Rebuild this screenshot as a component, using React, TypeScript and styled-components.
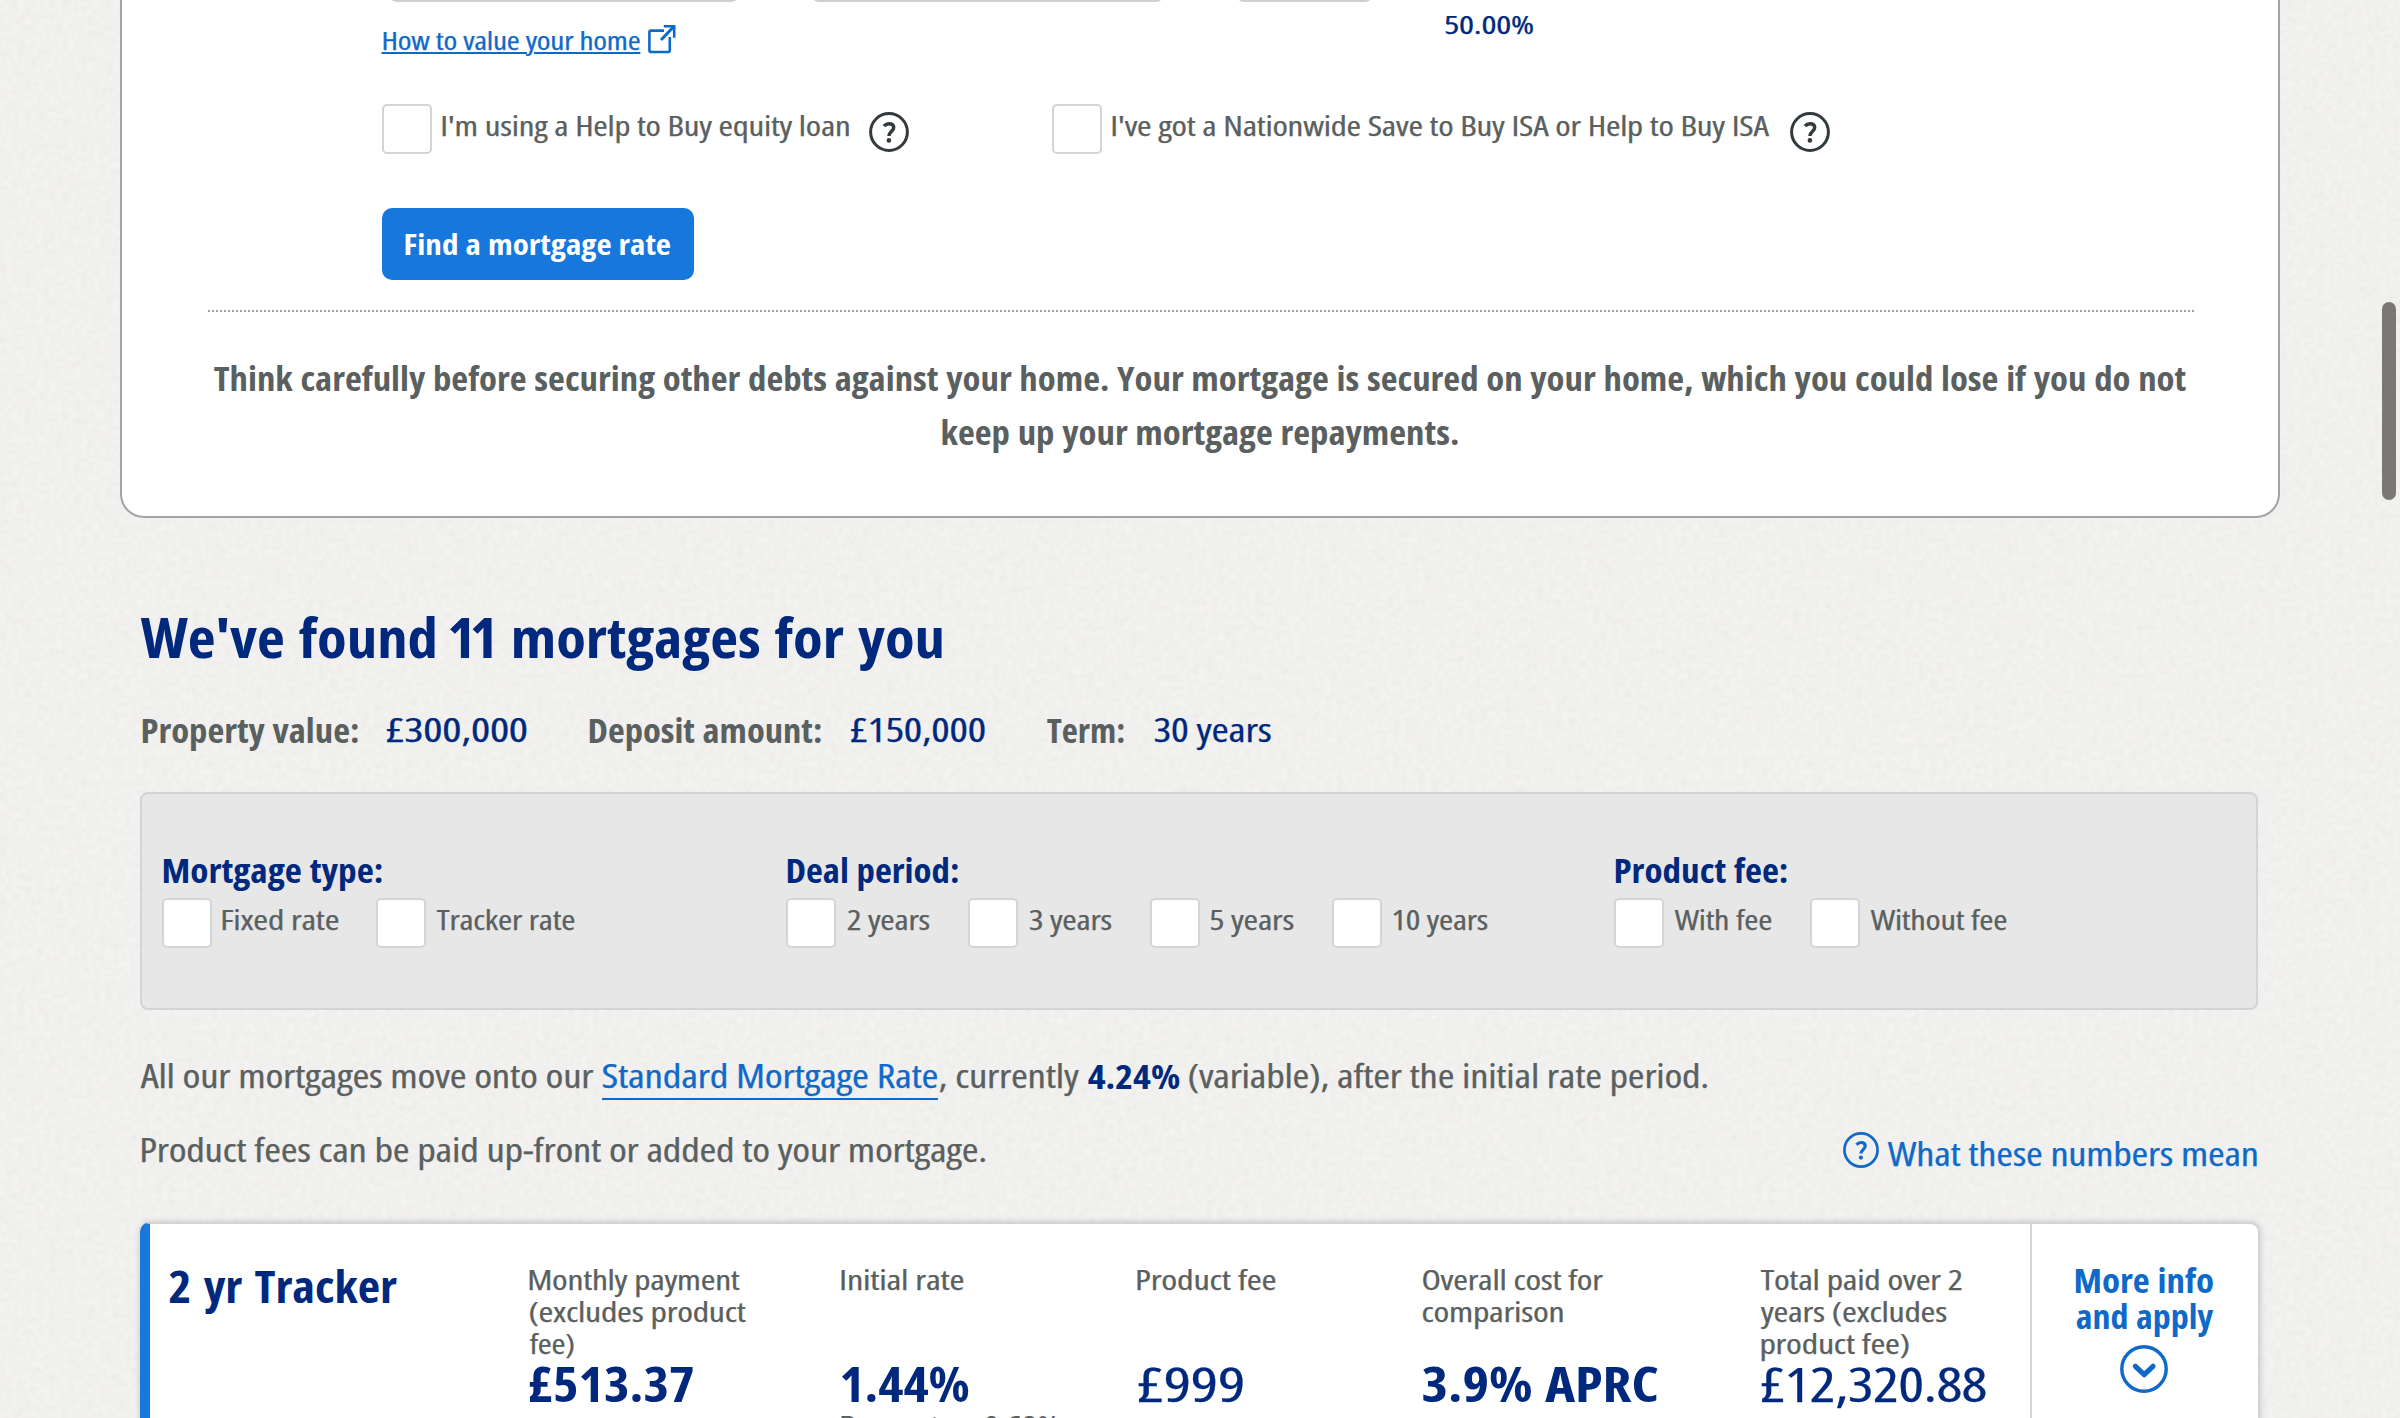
import React, { useLayoutEffect, useState } from 'react';
import styled, { createGlobalStyle } from 'styled-components';

const FONT = '"Open Sans", "Noto Sans", sans-serif';
const c = {
  navy: '#00287d',
  grey: '#5a6060',
  link: '#0f69c9',
  button: '#1777dd',
  line: '#d3d4d5',
  dark: '#333a3e',
};

const GlobalStyle = createGlobalStyle`
  html, body { margin: 0; padding: 0; background: #f1f0ee; overflow: hidden; }
  * { box-sizing: border-box; }
`;

/* ---------- type ---------- */

type Kind = 'small' | 'body' | 'lead' | 'leadBold' | 'button' | 'title' | 'deal' | 'figure' | 'figureBold';
const kinds: Record<Kind, { size: number; line: number; weight: number; track: number; word: number; drop: number }> = {
  small: { size: 26, line: 30, weight: 400, track: -0.2, word: 0.5, drop: 0 },
  body: { size: 28, line: 32, weight: 400, track: -0.2, word: 0.5, drop: 0 },
  lead: { size: 33, line: 36, weight: 400, track: -0.2, word: 0.5, drop: 1.2 },
  leadBold: { size: 33, line: 36, weight: 700, track: 0, word: 1, drop: 1.5 },
  button: { size: 29, line: 36, weight: 700, track: 0, word: 1, drop: 0 },
  title: { size: 56, line: 64, weight: 700, track: 0, word: 3, drop: 0 },
  deal: { size: 44, line: 50, weight: 700, track: 0, word: 3, drop: 0.5 },
  figure: { size: 48, line: 56, weight: 400, track: -0.5, word: 0, drop: 0 },
  figureBold: { size: 48, line: 56, weight: 700, track: 0, word: 2, drop: 0 },
};

const Line = styled.span<{ $w: number; $kind: Kind; $color: string }>`
  display: block;
  flex: none;
  width: ${p => p.$w}px;
  height: ${p => kinds[p.$kind].line}px;
  font-family: ${FONT};
  font-size: ${p => kinds[p.$kind].size}px;
  font-weight: ${p => kinds[p.$kind].weight};
  font-stretch: condensed;
  line-height: ${p => kinds[p.$kind].line}px;
  letter-spacing: ${p => kinds[p.$kind].track}px;
  word-spacing: ${p => kinds[p.$kind].word}px;
  white-space: pre;
  color: ${p => p.$color};
  -webkit-text-stroke: ${p => (kinds[p.$kind].weight === 400 ? 0.25 : 0)}px ${p => p.$color};
`;

const Glyphs = styled.span<{ $underline?: boolean }>`
  display: inline-block;
  transform-origin: 0 50%;
  text-decoration: ${p => (p.$underline ? 'underline' : 'none')};
  text-decoration-thickness: 2px;
  text-underline-offset: 2px;
`;

const Kern = styled.span<{ $em: number }>`
  letter-spacing: -${p => p.$em}em;
`;

/* Sets a line of text to an exact measure, widening the condensed face. */
function Text({ w, kind = 'body', color = c.grey, underline, children }: {
  w: number; kind?: Kind; color?: string; underline?: boolean; children: string;
}) {
  const k = kinds[kind];
  const pair = children.indexOf(' 11 ');
  const [fit, setFit] = useState({ scale: 1, shift: 0 });
  useLayoutEffect(() => {
    const ctx = document.createElement('canvas').getContext('2d') as any;
    ctx.font = `${k.weight} condensed ${k.size}px ${FONT}`;
    ctx.letterSpacing = `${k.track}px`;
    ctx.wordSpacing = `${k.word}px`;
    const m = ctx.measureText(children);
    const kern = pair >= 0 ? k.size * 0.21 : 0;
    const scale = (w - 1) / (m.actualBoundingBoxRight + m.actualBoundingBoxLeft - kern);
    setFit({ scale, shift: m.actualBoundingBoxLeft * scale + 0.7 });
  }, [w, k, children, pair]);
  return (
    <Line $w={w} $kind={kind} $color={color}>
      <Glyphs $underline={underline} style={{ transform: `translate(${fit.shift}px, ${k.drop}px) scaleX(${fit.scale})` }}>
        {pair >= 0
          ? <>{children.slice(0, pair)}<Kern $em={0.08}> </Kern><Kern $em={0.1}>1</Kern><Kern $em={0.03}>1</Kern>{children.slice(pair + 3)}</>
          : children}
      </Glyphs>
    </Line>
  );
}

/* ---------- page ---------- */

const Page = styled.main`
  position: relative;
  width: 2400px;
  height: 1418px;
  overflow: hidden;
  background: #f1f0ee;
`;

const Paper = styled.svg`
  position: absolute;
  inset: 0;
  width: 2400px;
  height: 1418px;
`;

const Content = styled.div`
  position: relative;
  display: flex;
  flex-direction: column;
`;

const Scrollbar = styled.div`
  position: absolute;
  top: 302px;
  right: 4px;
  width: 14px;
  height: 198px;
  border-radius: 7px;
  background: #797876;
`;

/* ---------- finder form ---------- */

const FormCard = styled.section`
  width: 2160px;
  height: 518px;
  margin: 0 120px;
  background: #fff;
  border: 2px solid #a2a5a7;
  border-top: 0;
  border-radius: 0 0 24px 24px;
`;

const InputRow = styled.div`
  display: flex;
  gap: 72px;
  height: 2px;
  padding-left: 267px;
`;

const InputEdge = styled.div<{ $w: number }>`
  width: ${p => p.$w}px;
  height: 24px;
  margin-top: -22px;
  border: 2px solid #cfcfcf;
  border-radius: 8px;
`;

const ValueRow = styled.div`
  display: grid;
  grid-template-columns: 1063px auto;
  height: 102px;
  padding: 7px 0 0 260px;
`;

const ValueLink = styled.div`
  display: flex;
  gap: 8px;
  padding-top: 16px;
`;

const CheckRow = styled.div`
  display: flex;
  height: 104px;
  padding-left: 260px;
`;

const CheckOption = styled.div<{ $w: number }>`
  display: flex;
  width: ${p => p.$w}px;
`;

const Checkbox = styled.span`
  flex: none;
  width: 50px;
  height: 50px;
  margin-right: 10px;
  background: #fff;
  border: 2px solid ${c.line};
  border-radius: 5px;
`;

const CheckLabel = styled.div`
  padding-top: 5px;
`;

const HelpSlot = styled.div`
  padding: 8px 0 0 20px;
`;

const FindButton = styled.button`
  display: block;
  width: 312px;
  height: 72px;
  margin: 0 0 0 260px;
  padding: 0 22px;
  border: 0;
  border-radius: 10px;
  background: ${c.button};
  text-align: left;
`;

const DottedRule = styled.div`
  height: 2px;
  margin: 30px 84px 0;
  background: repeating-linear-gradient(90deg, #fff 0 2px, #a0a0a0 2px 4px);
`;

const Warning = styled.div`
  display: flex;
  flex-direction: column;
  align-items: center;
  gap: 18px;
  padding: 47px 1px 0 0;
`;

/* ---------- results ---------- */

const Results = styled.section`
  display: flex;
  flex-direction: column;
  width: 2120px;
  margin-left: 140px;
`;

const TitleRow = styled.div`
  height: 193px;
  padding-top: 86px;
`;

const Summary = styled.div`
  display: flex;
  height: 81px;
  padding-left: 2px;
`;

const SummaryItem = styled.div<{ $w: number; $gap: number }>`
  display: flex;
  gap: ${p => p.$gap}px;
  width: ${p => p.$w}px;
`;

const Filters = styled.div`
  display: grid;
  grid-template-columns: 624px 828px auto;
  width: 2118px;
  height: 218px;
  padding: 57px 0 0 20px;
  background: #e7e7e7;
  border: 2px solid ${c.line};
  border-radius: 8px;
`;

const FilterTitle = styled.div`
  padding-left: 1px;
  height: 47px;
`;

const FilterOptions = styled.div`
  display: flex;
`;

const Note = styled.p`
  display: flex;
  margin: 0;
  height: 74px;
`;

const Notes = styled.div`
  padding-top: 47px;
  height: 212px;
`;

const InlineGap = styled.span<{ $w: number }>`
  width: ${p => p.$w}px;
  flex: none;
`;

const RateLink = styled.span`
  height: 43px;
  border-bottom: 2px solid ${c.link};
`;

const FeeRow = styled.div`
  display: flex;
  justify-content: space-between;
  width: 2117px;
  padding-left: 1px;
`;

const NumbersLink = styled.div`
  display: flex;
  gap: 8px;
`;

const NumbersLabel = styled.div`
  padding-top: 4px;
`;

const IconBox = styled.span`
  display: block;
  height: 36px;
  margin-top: 1px;
`;

const Deal = styled.article`
  display: flex;
  width: 2120px;
  height: 240px;
  background: #fff;
  border: 2px solid ${c.line};
  border-left: 10px solid ${c.button};
  border-radius: 10px 10px 0 0;
  box-shadow: 0 0 6px rgba(0, 0, 0, 0.18);
`;

const DealName = styled.div`
  width: 379px;
  padding: 36px 0 0 19px;
`;

const DealColumn = styled.div<{ $w: number }>`
  display: flex;
  flex-direction: column;
  width: ${p => p.$w}px;
  flex: none;
`;

const ColumnLabel = styled.div`
  height: 132px;
  padding-top: 39px;
`;

const Reversion = styled.div`
  margin-top: -3px;
`;

const Apply = styled.div`
  display: flex;
  flex: 1;
  flex-direction: column;
  align-items: center;
  border-left: 2px solid ${c.line};
  padding: 37px 2px 0 0;
`;

const ApplyIcon = styled.div`
  margin-top: 12px;
  height: 48px;
`;

/* ---------- icons ---------- */

const HelpIcon = ({ size, color }: { size: number; color: string }) => (
  <svg width={size} height={size} viewBox="0 0 40 40" fill="none" stroke={color} strokeWidth="3">
    <circle cx="20" cy="20" r="18.4" />
    <path d="M15 14.2c1.4-1.7 3-2.5 5-2.5 2.9 0 4.7 1.5 4.7 3.9 0 3.7-4.8 4.2-4.8 8.4" strokeWidth="3.5" />
    <circle cx="19.9" cy="28.4" r="2.3" fill={color} stroke="none" />
  </svg>
);

const ExternalIcon = () => (
  <svg width="28" height="29" viewBox="0 0 28 29" fill="none" stroke={c.link} strokeWidth="2.6">
    <path d="M16 5.6H3.2Q1.4 5.6 1.4 7.4V25.2Q1.4 27 3.2 27H20Q21.8 27 21.8 25.2V12" />
    <path d="M13 15L25.6 1.8" strokeWidth="3" />
    <path d="M15.8 1.3h10.4v11.4" />
  </svg>
);

const ChevronCircle = () => (
  <svg width="48" height="48" viewBox="0 0 48 48" fill="none" stroke={c.link}>
    <circle cx="24" cy="24" r="22.2" strokeWidth="3.4" />
    <path d="M15.4 21.3l8.8 8.4 8.8-8.4" strokeWidth="5.2" strokeLinecap="round" strokeLinejoin="round" />
  </svg>
);

/* ---------- data ---------- */

const filters = [
  { title: 'Mortgage type:', w: 219, options: [['Fixed rate', 117, 214], ['Tracker rate', 139, 260]] },
  { title: 'Deal period:', w: 171, options: [['2 years', 84, 182], ['3 years', 84, 182], ['5 years', 84, 182], ['10 years', 96, 200]] },
  { title: 'Product fee:', w: 172, options: [['With fee', 98, 196], ['Without fee', 137, 220]] },
] as { title: string; w: number; options: [string, number, number][] }[];

const columns: { w: number; label: [string, number][]; value: [string, number]; bold?: boolean; extra?: [string, number] }[] = [
  { w: 312, label: [['Monthly payment', 211], ['(excludes product', 217], ['fee)', 45]], value: ['£513.37', 164], bold: true },
  { w: 296, label: [['Initial rate', 123]], value: ['1.44%', 128], bold: true, extra: ['Base rate + 0.69%', 220] },
  { w: 285, label: [['Product fee', 139]], value: ['£999', 107] },
  { w: 338, label: [['Overall cost for', 182], ['comparison', 141]], value: ['3.9% APRC', 237], bold: true },
  { w: 270, label: [['Total paid over 2', 202], ['years (excludes', 187], ['product fee)', 149]], value: ['£12,320.88', 226] },
];

export default function App() {
  return (
    <Page>
      <GlobalStyle />
      <Paper>
        <filter id="grain" x="0" y="0" width="100%" height="100%" colorInterpolationFilters="sRGB">
          <feTurbulence type="fractalNoise" baseFrequency="0.16" numOctaves="3" seed="4" stitchTiles="stitch" />
          <feColorMatrix values="0.04 0 0 0 0.924  0.04 0 0 0 0.921  0.04 0 0 0 0.914  0 0 0 0 1" />
        </filter>
        <rect width="2400" height="1418" filter="url(#grain)" />
      </Paper>
      <Content>
        <FormCard>
          <InputRow>
            <InputEdge $w={350} />
            <InputEdge $w={353} />
            <InputEdge $w={137} />
          </InputRow>
          <ValueRow>
            <ValueLink>
              <Text w={258} kind="small" color={c.link} underline>How to value your home</Text>
              <ExternalIcon />
            </ValueLink>
            <Text w={88} kind="small" color={c.navy}>50.00%</Text>
          </ValueRow>
          <CheckRow>
            <CheckOption $w={670}>
              <Checkbox />
              <CheckLabel><Text w={407}>I'm using a Help to Buy equity loan</Text></CheckLabel>
              <HelpSlot><HelpIcon size={40} color={c.dark} /></HelpSlot>
            </CheckOption>
            <CheckOption $w={800}>
              <Checkbox />
              <CheckLabel><Text w={658}>I've got a Nationwide Save to Buy ISA or Help to Buy ISA</Text></CheckLabel>
              <HelpSlot><HelpIcon size={40} color={c.dark} /></HelpSlot>
            </CheckOption>
          </CheckRow>
          <FindButton><Text w={267} kind="button" color="#fff">Find a mortgage rate</Text></FindButton>
          <DottedRule />
          <Warning>
            <Text w={1973} kind="leadBold">Think carefully before securing other debts against your home. Your mortgage is secured on your home, which you could lose if you do not</Text>
            <Text w={517} kind="leadBold">keep up your mortgage repayments.</Text>
          </Warning>
        </FormCard>

        <Results>
          <TitleRow><Text w={802} kind="title" color={c.navy}>We've found 11 mortgages for you</Text></TitleRow>
          <Summary>
            <SummaryItem $w={447} $gap={28}>
              <Text w={216} kind="leadBold">Property value:</Text>
              <Text w={141} kind="lead" color={c.navy}>£300,000</Text>
            </SummaryItem>
            <SummaryItem $w={457} $gap={29}>
              <Text w={232} kind="leadBold">Deposit amount:</Text>
              <Text w={135} kind="lead" color={c.navy}>£150,000</Text>
            </SummaryItem>
            <SummaryItem $w={240} $gap={30}>
              <Text w={78} kind="leadBold">Term:</Text>
              <Text w={118} kind="lead" color={c.navy}>30 years</Text>
            </SummaryItem>
          </Summary>

          <Filters>
            {filters.map(f => (
              <div key={f.title}>
                <FilterTitle><Text w={f.w} kind="leadBold" color={c.navy}>{f.title}</Text></FilterTitle>
                <FilterOptions>
                  {f.options.map(([name, w, slot]) => (
                    <CheckOption key={name} $w={slot}>
                      <Checkbox />
                      <CheckLabel><Text w={w}>{name}</Text></CheckLabel>
                    </CheckOption>
                  ))}
                </FilterOptions>
              </div>
            ))}
          </Filters>

          <Notes>
            <Note>
              <Text w={454} kind="lead">All our mortgages move onto our</Text>
              <InlineGap $w={8} />
              <RateLink><Text w={336} kind="lead" color={c.link}>Standard Mortgage Rate</Text></RateLink>
              <InlineGap $w={1} />
              <Text w={140} kind="lead">, currently</Text>
              <InlineGap $w={8} />
              <Text w={93} kind="leadBold" color={c.navy}>4.24%</Text>
              <InlineGap $w={8} />
              <Text w={520} kind="lead">(variable), after the initial rate period.</Text>
            </Note>
            <FeeRow>
              <Text w={845} kind="lead">Product fees can be paid up-front or added to your mortgage.</Text>
              <NumbersLink>
                <IconBox><HelpIcon size={36} color={c.link} /></IconBox>
                <NumbersLabel><Text w={370} kind="lead" color={c.link}>What these numbers mean</Text></NumbersLabel>
              </NumbersLink>
            </FeeRow>
          </Notes>

          <Deal>
            <DealName><Text w={228} kind="deal" color={c.navy}>2 yr Tracker</Text></DealName>
            {columns.map(col => (
              <DealColumn key={col.value[0]} $w={col.w}>
                <ColumnLabel>
                  {col.label.map(([t, w]) => <Text key={t} w={w}>{t}</Text>)}
                </ColumnLabel>
                <Text w={col.value[1]} kind={col.bold ? 'figureBold' : 'figure'} color={c.navy}>{col.value[0]}</Text>
                {col.extra && <Reversion><Text w={col.extra[1]}>{col.extra[0]}</Text></Reversion>}
              </DealColumn>
            ))}
            <Apply>
              <Text w={138} kind="leadBold" color={c.link}>More info</Text>
              <Text w={139} kind="leadBold" color={c.link}>and apply</Text>
              <ApplyIcon><ChevronCircle /></ApplyIcon>
            </Apply>
          </Deal>
        </Results>
      </Content>
      <Scrollbar />
    </Page>
  );
}
